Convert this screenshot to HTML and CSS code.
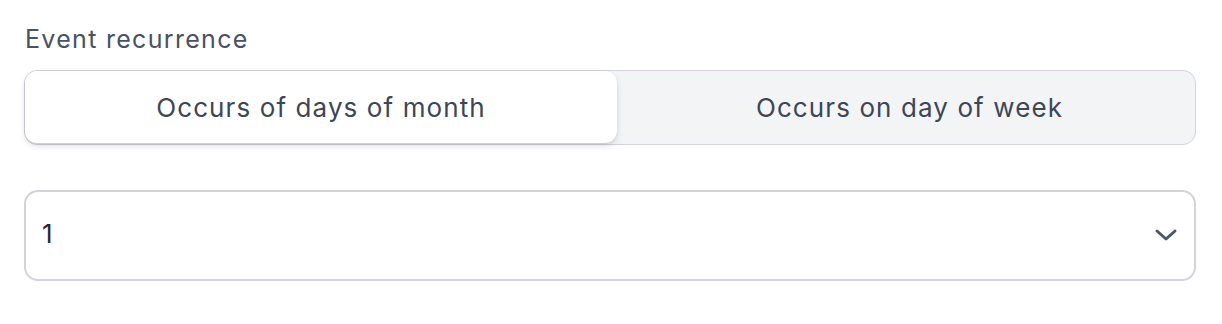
FILE: index.html
```html
<!DOCTYPE html>
<html lang="en">
<head>
  <meta charset="UTF-8">
  <meta name="viewport" content="width=device-width, initial-scale=1.0">
  <title>Event recurrence</title>
  <link rel="stylesheet" href="styles.css">
</head>
<body>

<div class="field">
  <label class="field-label">Event recurrence</label>

  <div class="segmented">
    <button class="segment active">Occurs of days of month</button>
    <button class="segment">Occurs on day of week</button>
  </div>

  <div class="select">
    <span class="select-value">1</span>
    <svg class="chevron" width="24" height="14" viewBox="0 0 24 14">
      <polyline points="3,3 12,11 21,3" fill="none" stroke="#4b5563" stroke-width="3" stroke-linecap="round" stroke-linejoin="round"/>
    </svg>
  </div>
</div>

</body>
</html>
```

FILE: styles.css
```css
body {
  margin: 0;
  padding: 24px 26px 0 24px;
  font-family: Inter, "Noto Sans", sans-serif;
  background: #fff;
}
.field {
  display: flex;
  flex-direction: column;
}
.field-label {
  font-size: 25px;
  line-height: 30px;
  letter-spacing: 1.3px;
  color: #485263;
  padding-left: 1px;
  margin-bottom: 16px;
}
.segmented {
  display: flex;
  height: 75px;
  box-sizing: border-box;
  background: #f3f4f6;
  border: 1.5px solid #d1d5db;
  border-radius: 13px;
}
.segment {
  flex: 1;
  border: none;
  background: transparent;
  font-family: inherit;
  font-size: 26px;
  letter-spacing: 1.1px;
  color: #3d4657;
  border-radius: 12px;
  padding: 0 0 0 7px;
  margin: 0;
}
.segment.active {
  flex: 0 0 592px;
  padding: 0;
  background: #fff;
  margin-bottom: 1px;
  box-shadow: 0 3px 6px rgba(0, 0, 0, 0.12), 0 1px 2px rgba(0, 0, 0, 0.08);
}
.select {
  margin-top: 45px;
  height: 91px;
  box-sizing: border-box;
  border: 2px solid #d1d5db;
  border-radius: 14px;
  display: flex;
  align-items: center;
  justify-content: space-between;
  padding: 0 16px 0 16px;
}
.select-value {
  font-size: 26px;
  color: #1f2937;
  margin-top: -4px;
}
.chevron {
  margin-top: -2px;
}
```
